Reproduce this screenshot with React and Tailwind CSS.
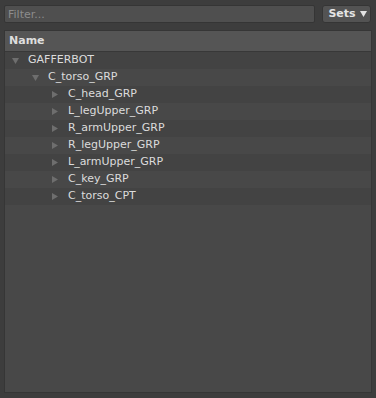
import { useState } from "react";

const tree = {
  name: "GAFFERBOT",
  open: true,
  children: [
    {
      name: "C_torso_GRP",
      open: true,
      children: [
        { name: "C_head_GRP" },
        { name: "L_legUpper_GRP" },
        { name: "R_armUpper_GRP" },
        { name: "R_legUpper_GRP" },
        { name: "L_armUpper_GRP" },
        { name: "C_key_GRP" },
        { name: "C_torso_CPT" },
      ],
    },
  ],
};

function flatten(node, depth = 0, out = []) {
  out.push({ ...node, depth });
  if (node.open && node.children) {
    node.children.forEach((c) => flatten(c, depth + 1, out));
  }
  return out;
}

function Arrow({ open }) {
  return open ? (
    <svg width="7" height="6" viewBox="0 0 7 6" className="shrink-0">
      <path d="M0 0 L7 0 L3.5 6 Z" fill="#6e6e6e" />
    </svg>
  ) : (
    <svg width="6" height="7" viewBox="0 0 6 7" className="shrink-0">
      <path d="M0 0 L6 3.5 L0 7 Z" fill="#6e6e6e" />
    </svg>
  );
}

export default function App() {
  const [filter, setFilter] = useState("");
  const rows = flatten(tree);

  return (
    <div
      className="w-[376px] h-[398px] bg-[#3d3d3d] flex flex-col px-[4px] pt-[5px] pb-[5px] text-[11px] text-[#dcdcdc]"
      style={{ fontFamily: '"DejaVu Sans", sans-serif' }}
    >
      <div className="flex items-center gap-[7px] h-[18px]">
        <input
          value={filter}
          onChange={(e) => setFilter(e.target.value)}
          placeholder="Filter..."
          className="flex-1 h-[18px] bg-[#4f4f4f] border border-[#353535] rounded-[2px] px-[3px] text-[11px] text-[#dcdcdc] placeholder:text-[#8c8c8c] outline-none"
        />
        <button className="h-[18px] w-[49px] mr-[1px] bg-[#535353] border border-[#353535] rounded-[3px] font-bold text-[#e4e4e4] flex items-center justify-center gap-[4px] pl-[2px]">
          Sets
          <svg width="7" height="6" viewBox="0 0 7 6">
            <path d="M0 0 L7 0 L3.5 6 Z" fill="#e4e4e4" />
          </svg>
        </button>
      </div>

      <div className="mt-[7px] flex-1 bg-[#484848] border border-[#363636] flex flex-col">
        <div className="h-[21px] bg-[#555555] border-b border-[#383838] flex items-center px-[4px] font-bold text-[#dedede]">
          Name
        </div>
        <div className="flex flex-col">
          {rows.map((r, i) => (
            <div
              key={r.name}
              className={`h-[17px] flex items-center ${i % 2 === 0 ? "bg-[#434343]" : "bg-[#484848]"}`}
              style={{ paddingLeft: 7 + r.depth * 20 }}
            >
              <span className="w-[14px] flex items-center">
                <Arrow open={r.open} />
              </span>
              <span className="ml-[2px]">{r.name}</span>
            </div>
          ))}
        </div>
      </div>
    </div>
  );
}
